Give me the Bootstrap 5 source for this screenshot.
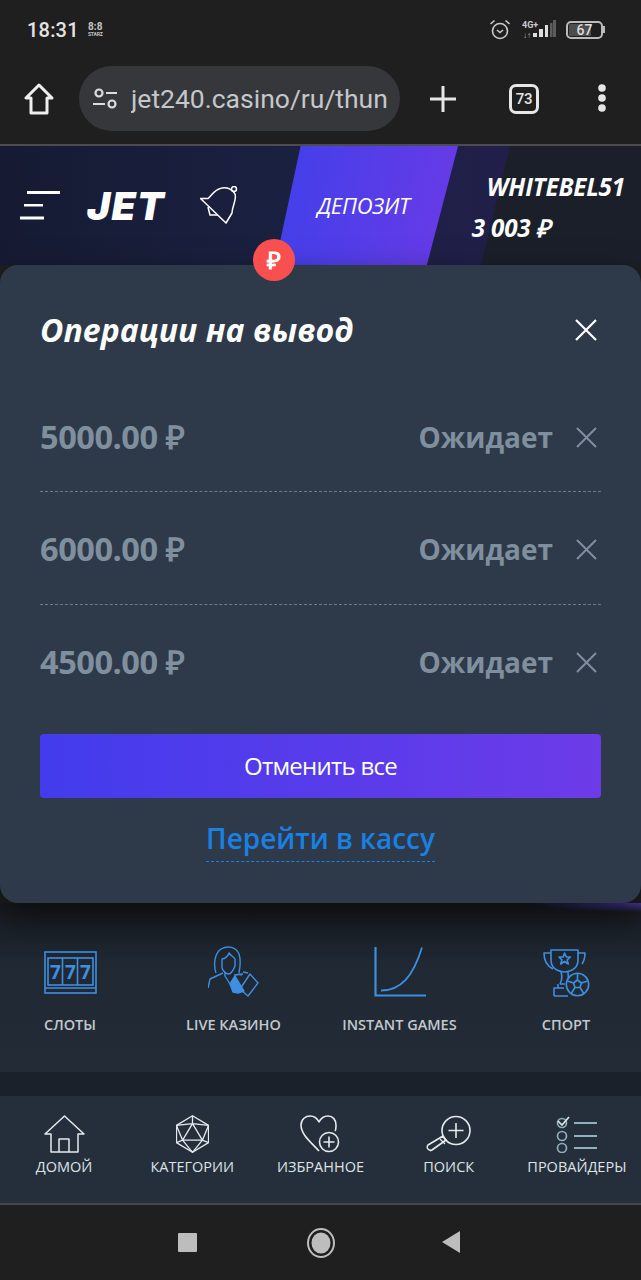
<!DOCTYPE html>
<html lang="ru">
<head>
    <meta charset="UTF-8">
    <meta name="viewport" content="width=device-width, initial-scale=1.0">
    <title>JET</title>
    <link href="https://cdn.jsdelivr.net/npm/bootstrap@5.3.0/dist/css/bootstrap.min.css" rel="stylesheet">
    <style>
        html, body { background: #1f1f1f; }
        body { width: 641px; height: 1280px; overflow: hidden; font-family: "Open Sans", sans-serif; color: #fff; }
        svg { display: block; flex: none; }

        /* android + browser chrome */
        .status-bar { height: 54px; padding: 5px 36px 0 27px; background: #1f1f1f; font-family: Roboto, sans-serif; }
        .status-time { font-size: 20px; font-weight: 500; color: #e4e4e4; letter-spacing: .2px; }
        .status-tag { width: 17px; font-size: 10px; line-height: 9px; font-weight: 700; color: #c4c4c4; text-align: center; margin-left: 8px; }
        .status-tag small { display: block; font-size: 5px; line-height: 6px; letter-spacing: -.2px; }
        .batt { width: 37px; height: 18px; border: 2px solid #bbb; border-radius: 5px; padding: 1px; position: relative; margin-left: 10px; }
        .batt-fill { display: block; width: 72%; height: 100%; background: #4d4d4d; border-radius: 1px; }
        .batt-num { position: absolute; inset: 0; font-size: 14px; line-height: 14px; text-align: center; color: #ddd; font-weight: 500; }
        .batt-tip { width: 2px; height: 7px; background: #bbb; margin-left: 0; }
        .browser-bar { padding: 12px 34px 13px 24px; background: #1f1f1f; border-bottom: 2px solid #4a4c4f; font-family: Roboto, sans-serif; box-sizing: content-box; height: 65px; }
        .url-pill { width: 321px; height: 65px; margin-left: 25px; margin-right: 29px; padding-left: 13px; background: #35373b; border-radius: 33px; overflow: hidden; font-size: 26.500px; color: #c5c7ca; white-space: nowrap; }
        .url-text { margin-left: 13px; width: 257px; overflow: hidden; }
        .tab-count { width: 30px; height: 30px; border: 3px solid #e6e6e6; border-radius: 7px; font-size: 15px; font-weight: 500; line-height: 24px; letter-spacing: -.4px; text-align: center; color: #e6e6e6; margin-left: 52px; margin-right: 58px; }

        /* site header */
        .site-top { height: 119px; position: relative; background: #1b1f2a; padding-left: 20px; }
        .header-tint { position: absolute; left: 0; top: 0; width: 510px; height: 119px; background: linear-gradient(90deg, #161b33 0%, #1a2040 55%, #211f4a 100%); clip-path: polygon(0 0, 100% 0, 94.300% 100%, 0 100%); }
        .site-top > svg, .logo-word { position: relative; }
        .logo-word { width: 78px; font-family: Inter, "Liberation Sans", sans-serif; font-size: 39px; line-height: 1; font-weight: 900; font-style: italic; letter-spacing: 1.200px; margin-left: 26px; margin-right: 35px; white-space: nowrap; }
        .deposit-btn { position: absolute; left: 275px; top: 0; width: 183px; height: 119px; padding-right: 6px; background: linear-gradient(100deg, #4040ea, #6a3ae6); clip-path: polygon(14% 0, 100% 0, 83% 100%, 0 100%); font-size: 22px; font-style: italic; letter-spacing: -.2px; }
        .user-box { position: absolute; right: 16px; top: 27px; text-align: right; font-style: italic; font-weight: 700; font-size: 24.300px; line-height: 28px; letter-spacing: -.2px; }
        .user-sum { text-align: left; margin-top: 13px; margin-left: -15px; font-size: 24.200px; }
        .rub-badge { position: absolute; left: 253px; top: 93px; z-index: 3; width: 42px; height: 42px; border-radius: 50%; background: #f9504f; font-size: 24px; font-weight: 800; }

        /* withdraw panel */
        .withdraw-panel { height: 638px; position: relative; z-index: 2; background: #2e3a4a; border-radius: 18px; padding: 0 40px; box-shadow: 0 14px 34px rgba(0, 0, 0, .5); }
        .panel-head { height: 115px; padding-top: 14px; }
        .panel-title { font-size: 32px; font-weight: 700; font-style: italic; letter-spacing: .05px; white-space: nowrap; }
        .op-row { height: 112.300px; border-bottom: 1px dashed #6d7b8a; color: #7f8f9e; padding-top: 3px; }
        .op-row.no-line { border-bottom: 0; }
        .op-sum { font-size: 32.600px; font-weight: 700; letter-spacing: -.5px; }
        .op-state { font-size: 28px; font-weight: 700; margin-right: 23px; }
        .cancel-all { height: 64px; margin-top: 17.500px; font-size: 24px; letter-spacing: -.75px; color: #fff; background: linear-gradient(90deg, #423ced, #6d3be8); border: 0; border-radius: 4px; }
        .cancel-all:hover { color: #fff; }
        .cash-link { display: table; margin: 21px auto 0; padding-bottom: 4px; font-size: 28px; line-height: 38px; font-weight: 600; color: #1a80e2; text-decoration: none; border-bottom: 1px dashed #1a80e2; }

        /* categories */
        .cat-strip { height: 169px; background: radial-gradient(ellipse 110px 9px at 100% 0, #4a3ab0, transparent), linear-gradient(180deg, #171b20 0%, #1f2833 35%, #222b36 100%); padding-top: 43px; }
        .cat-row { display: grid; grid-template-columns: 166px 161px 171px 162px; margin-left: -13px; }
        .cat-item { font-size: 14.500px; line-height: 20px; font-weight: 600; color: #c3c8cd; text-align: center; white-space: nowrap; }
        .cat-icon { height: 52px; margin-bottom: 17px; }
        .cat-gap { height: 24px; background: #1a212b; }

        /* bottom nav */
        .site-nav { height: 107px; background: #252f3b; padding-top: 19px; }
        .nav-row { display: grid; grid-template-columns: repeat(5, 1fr); }
        .nav-cell { font-size: 14.500px; line-height: 20px; color: #dfe3e6; text-align: center; white-space: nowrap; }
        .nav-icon { height: 38px; margin-bottom: 4px; }
        .sys-line { height: 2px; background: #43474b; }
        .sys-bar { height: 75px; background: #1f1f1f; }
        .sys-square { width: 19px; height: 19px; background: #bdbdbd; border-radius: 1px; }
    </style>
</head>
<body>
    <!-- status bar -->
    <div class="status-bar d-flex align-items-center">
        <span class="status-time">18:31</span>
        <span class="status-tag">8:8<small>STARZ</small></span>
        <div class="ms-auto d-flex align-items-center">
            <svg width="22" height="21" viewBox="0 0 22 21" fill="none" stroke="#ccc" stroke-width="1.600"><circle cx="11" cy="12" r="7.500"/><path d="M1.500 5l4-3.500M20.500 5l-4-3.500M8 11l3 2.500 3-2.500"/></svg>
            <svg style="margin-left:11px" width="34" height="20" viewBox="0 0 34 20"><text x="0" y="8" font-size="9" font-weight="700" fill="#ccc" font-family="Roboto">4G+</text><text x="1" y="18" font-size="8" fill="#bbb" font-family="Roboto">↓↑</text><path d="M11 17h4v-4h-4zM17 17h4V9h-4zM23 17h3V5h-3z" fill="#ddd"/><path d="M28 17h2.500V3H28zM31 17h3V0h-3z" fill="#5c5c5c"/></svg>
            <div class="batt"><span class="batt-fill"></span><span class="batt-num">67</span></div>
            <span class="batt-tip"></span>
        </div>
    </div>

    <!-- browser toolbar -->
    <div class="browser-bar d-flex align-items-center">
        <svg width="30" height="32" viewBox="0 0 30 32" fill="none" stroke="#eee" stroke-width="3" stroke-linejoin="round"><path d="M15 2L2 15h5v15h16V15h5z"/></svg>
        <div class="url-pill d-flex align-items-center">
            <svg width="26" height="24" viewBox="0 0 26 24" fill="none" stroke="#ddd" stroke-width="2.200"><circle cx="7" cy="6" r="3.500"/><path d="M14 6h11M1 17h12"/><circle cx="20" cy="17" r="3.500"/></svg>
            <div class="url-text">jet240.casino/ru/thunder</div>
        </div>
        <svg width="28" height="28" viewBox="0 0 28 28" stroke="#e6e6e6" stroke-width="3"><path d="M14 1v26M1 14h26"/></svg>
        <div class="tab-count">73</div>
        <svg width="10" height="30" viewBox="0 0 10 30" fill="#e6e6e6"><circle cx="5" cy="4" r="3.800"/><circle cx="5" cy="14" r="3.800"/><circle cx="5" cy="24" r="3.800"/></svg>
    </div>

    <!-- site header -->
    <div class="site-top d-flex align-items-center">
        <div class="header-tint"></div>
        <svg width="41" height="30" viewBox="0 0 41 30" fill="#fff"><path d="M7 0h33v3H7zM4 13h19v2.500H4zM0 25.500h24V28.500H0z"/></svg>
        <span class="logo-word">JET</span>
        <svg width="40" height="40" viewBox="0 0 40 40" fill="none" stroke="#fff" stroke-width="1.500" stroke-linejoin="round"><path d="M.5 12.500H8C12 9 15 3 22 2c6-1 11 2 13 6 2 6-3 12-3 19l-6 10z"/><path d="M8 21l2 8h8"/><circle cx="34" cy="3" r="2.500"/></svg>
        <div class="deposit-btn d-flex align-items-center justify-content-center">ДЕПОЗИТ</div>
        <div class="user-box">
            <div>WHITEBEL51</div>
            <div class="user-sum">3 003 ₽</div>
        </div>
        <div class="rub-badge d-flex align-items-center justify-content-center">₽</div>
    </div>

    <!-- withdraw panel -->
    <div class="withdraw-panel">
        <div class="panel-head d-flex align-items-center justify-content-between">
            <span class="panel-title">Операции на вывод</span>
            <svg class="me-1" width="22" height="22" viewBox="0 0 22 22" stroke="#fff" stroke-width="2.200"><path d="M1 1l20 20M21 1L1 21"/></svg>
        </div>
        <div class="op-row d-flex align-items-center">
            <span class="op-sum">5000.00 ₽</span>
            <span class="op-state ms-auto">Ожидает</span>
            <svg class="me-1" width="21" height="21" viewBox="0 0 21 21" stroke="#7f8f9e" stroke-width="2"><path d="M1 1l19 19M20 1L1 20"/></svg>
        </div>
        <div class="op-row d-flex align-items-center">
            <span class="op-sum">6000.00 ₽</span>
            <span class="op-state ms-auto">Ожидает</span>
            <svg class="me-1" width="21" height="21" viewBox="0 0 21 21" stroke="#7f8f9e" stroke-width="2"><path d="M1 1l19 19M20 1L1 20"/></svg>
        </div>
        <div class="op-row no-line d-flex align-items-center">
            <span class="op-sum">4500.00 ₽</span>
            <span class="op-state ms-auto">Ожидает</span>
            <svg class="me-1" width="21" height="21" viewBox="0 0 21 21" stroke="#7f8f9e" stroke-width="2"><path d="M1 1l19 19M20 1L1 20"/></svg>
        </div>
        <button class="btn cancel-all w-100" type="button">Отменить все</button>
        <a class="cash-link" href="#">Перейти в кассу</a>
    </div>

    <!-- categories -->
    <div class="cat-strip">
        <div class="cat-row">
            <div class="cat-item">
                <div class="cat-icon d-flex align-items-center justify-content-center">
                    <svg width="53" height="43" viewBox="0 0 53 43" fill="none" stroke="#3f8fe0" stroke-width="1.600"><rect x="1" y="1" width="51" height="41"/><rect x="4" y="7" width="45" height="27"/><path d="M18.500 7v27M33.500 7v27M1 37h51"/><text x="6" y="28" font-size="19" font-weight="700" fill="#3f8fe0" stroke="none" font-family="Open Sans">7</text><text x="21" y="28" font-size="19" font-weight="700" fill="#3f8fe0" stroke="none" font-family="Open Sans">7</text><text x="36" y="28" font-size="19" font-weight="700" fill="#3f8fe0" stroke="none" font-family="Open Sans">7</text></svg>
                </div>
                СЛОТЫ
            </div>
            <div class="cat-item">
                <div class="cat-icon d-flex align-items-center justify-content-center">
                    <svg width="52" height="52" viewBox="0 0 52 52" fill="none" stroke="#3f8fe0" stroke-width="1.400" stroke-linejoin="round"><path d="M8 27C5 18 7 7 13 3c7-4 15-2 18 5 2 6 1 14 0 19"/><path d="M14 13c3 0 6-3 7-6 2 3 5 4 6 6v7c-2 5-4 8-6.500 8S15 25 14 22z"/><path d="M0 42l2-9 13-6M17 26v4l5 8 5-8v-2"/><path d="M27 29l8-1M30 28l4 1M35 26l5 1"/><path d="M42 28l8 9-10 13-8-7z"/><path d="M22 38l5-8 9 15-6 2-5-1z" fill="#3f8fe0"/></svg>
                </div>
                LIVE КАЗИНО
            </div>
            <div class="cat-item">
                <div class="cat-icon d-flex align-items-center justify-content-center">
                    <svg width="52" height="50" viewBox="0 0 52 50" fill="none" stroke="#3f8fe0" stroke-width="2"><path d="M1.500 0v48.500H52" stroke-width="2.200"/><path d="M7 43.500c20 0 32-14 41-43" stroke-width="1.800"/></svg>
                </div>
                INSTANT GAMES
            </div>
            <div class="cat-item">
                <div class="cat-icon d-flex align-items-center justify-content-center">
                    <svg width="48" height="50" viewBox="0 0 48 50" fill="none" stroke="#3f8fe0" stroke-width="1.600" stroke-linejoin="round"><path d="M9 3h27v10c0 6-4 11-13.500 12C13 24 9 19 9 13z"/><path d="M9 6H2c0 7 3 13 9 16M36 6h7c0 5-1 8-3 11"/><path d="M19 25c1 3 1 8-1 12M26 25c0 3 0 5 1 8"/><path d="M18 37h5M16 41v-4M12 49v-8h10M12 49h14"/><path d="M22.500 6l1.800 4h4.200l-3.400 2.800 1.200 4.200-3.800-2.500-3.800 2.500 1.200-4.200L17 10h4.200z"/><circle cx="35.500" cy="37.500" r="11.200" fill="#222b36"/><path d="M35.500 33l4 3-1.500 4.500h-5L31.500 36zM35.500 33v-6.500M39.500 36l6-2M38 40.500l3.500 5.500M33 40.500l-3.500 5.500M31.500 36l-6-2"/></svg>
                </div>
                СПОРТ
            </div>
        </div>
    </div>
    <div class="cat-gap"></div>

    <!-- bottom nav -->
    <div class="site-nav">
        <div class="nav-row">
            <div class="nav-cell">
                <div class="nav-icon d-flex justify-content-center">
                    <svg width="41" height="38" viewBox="0 0 41 38" fill="none" stroke="#e6eaec" stroke-width="1.500" stroke-linejoin="round"><path d="M20.500 1L1 19h6v18h27V19h6z"/><path d="M15 37V24h10v13"/></svg>
                </div>
                ДОМОЙ
            </div>
            <div class="nav-cell">
                <div class="nav-icon d-flex justify-content-center">
                    <svg width="33" height="38" viewBox="0 0 33 38" fill="none" stroke="#e6eaec" stroke-width="1.300" stroke-linejoin="round"><path d="M16.500.7l16 9.700v17.200l-16 9.700-16-9.700V10.400z"/><path d="M16.500 1v7.600L6.600 25.200h19.800L16.500 8.600M.5 10.400l16-1.800 16 1.800M.5 10.400l6.100 14.800-6.100 2.400M32.500 10.400l-6.100 14.800 6.100 2.400M6.600 25.200l9.900 12.100 9.900-12.100"/></svg>
                </div>
                КАТЕГОРИИ
            </div>
            <div class="nav-cell">
                <div class="nav-icon d-flex justify-content-center">
                    <svg width="40" height="38" viewBox="0 0 40 38" fill="none" stroke="#e6eaec" stroke-width="1.600" stroke-linejoin="round"><path d="M19 36C12 28 1 20 1 10 1 4 6 1 10 1s7 2 9 6c2-4 5-6 9-6 5 0 8 4 8 9 0 2 0 5-1 6"/><circle cx="29" cy="27" r="9.500" fill="#252f3b"/><path d="M29 21.500v11M23.500 27h11"/></svg>
                </div>
                ИЗБРАННОЕ
            </div>
            <div class="nav-cell">
                <div class="nav-icon d-flex justify-content-center">
                    <svg width="46" height="37" viewBox="0 0 46 37" fill="none" stroke="#e6eaec" stroke-width="1.600" stroke-linejoin="round"><circle cx="30" cy="15.500" r="14"/><path d="M30 8v15M22.500 15.500h15"/><path d="M20 25l-3-4L2 30c-1 1-1 3 0 4s3 2 4 1z"/><path d="M14 24l5 5" stroke-width="1.300"/></svg>
                </div>
                ПОИСК
            </div>
            <div class="nav-cell">
                <div class="nav-icon d-flex justify-content-center">
                    <svg width="42" height="38" viewBox="0 0 42 38" fill="none" stroke="#8fb0bd" stroke-width="1.700"><circle cx="6" cy="8" r="4.500"/><path d="M2 6l4 4 7-8" stroke="#dfe3e6"/><circle cx="6" cy="21" r="4.500"/><circle cx="6" cy="33" r="4.500"/><path d="M18 8h23M18 21h23M18 33h23" stroke-width="2"/></svg>
                </div>
                ПРОВАЙДЕРЫ
            </div>
        </div>
    </div>
    <div class="sys-line"></div>

    <!-- android nav -->
    <div class="sys-bar d-flex align-items-center">
        <div class="sys-square" style="margin-left:178px"></div>
        <svg style="margin-left:110px" width="28" height="30" viewBox="0 0 28 30"><ellipse cx="14" cy="15" rx="13" ry="14" fill="none" stroke="#bdbdbd" stroke-width="2"/><ellipse cx="14" cy="15" rx="9.500" ry="10.500" fill="#bdbdbd"/></svg>
        <svg style="margin-left:106px" width="20" height="23" viewBox="0 0 20 23" fill="#bdbdbd"><path d="M19 0v22L1 11z"/></svg>
    </div>
</body>
</html>
